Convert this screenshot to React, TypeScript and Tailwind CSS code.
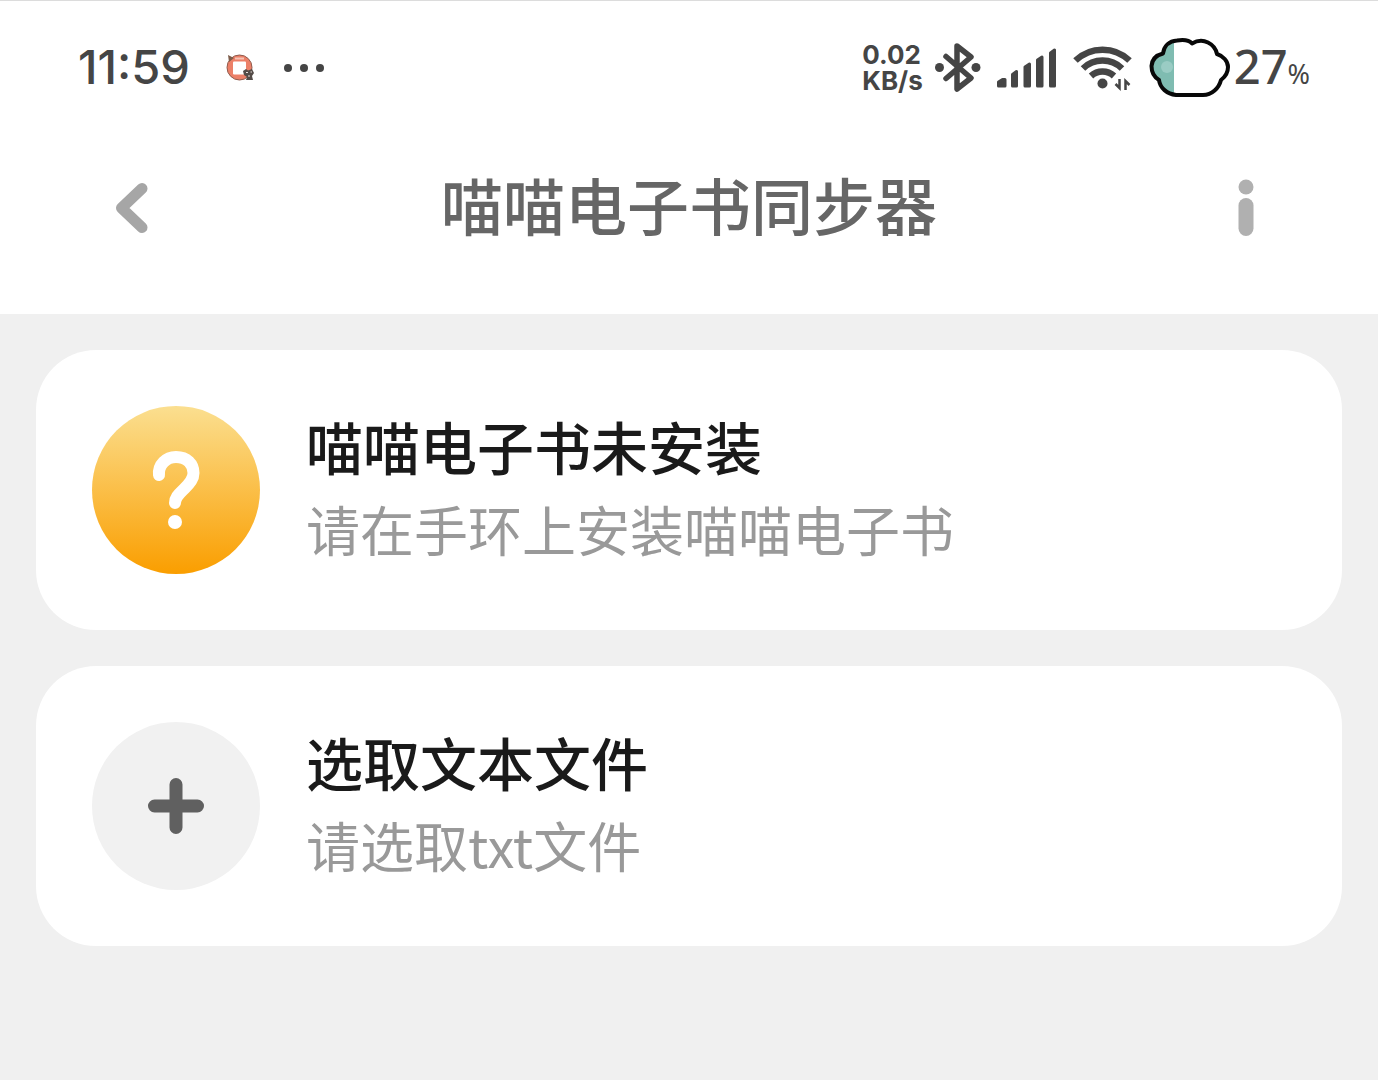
import type { ReactNode } from 'react';
import { twJoin } from 'tailwind-merge';

function AppBadgeIcon() {
  return (
    <svg viewBox="0 0 30 28" className="h-7 w-[30px]" aria-hidden="true">
      <circle cx="13.5" cy="13.5" r="12.5" fill="#ec8068" stroke="#8f5a4c" strokeWidth="1" />
      <path d="M2 1l1 7 5-4z" fill="#7d5d4a" />
      <path d="M9 4.500h9" stroke="#f6c3b4" strokeWidth="2" />
      <rect x="7" y="7.500" width="13" height="13" rx="1" fill="#fff" />
      <path d="M17 17l3-2 2 1.500 4-1.500 2 4-2 3 1 4h-7l1-3-3-2z" fill="#544c48" />
      <path d="M20 18.500h2M24.500 18h1.500M22 22h2" stroke="#e6dedb" strokeWidth="1" />
    </svg>
  );
}

function MoreDots() {
  return (
    <svg viewBox="0 0 40 8" className="h-2 w-10" fill="#454545" aria-hidden="true">
      <circle cx="4" cy="4" r="4" />
      <circle cx="20" cy="4" r="4" />
      <circle cx="36" cy="4" r="4" />
    </svg>
  );
}

function BluetoothIcon() {
  return (
    <svg viewBox="0 0 46 52" className="h-[52px] w-[46px]" aria-hidden="true">
      <path
        d="M11 14.5L36 36 22 47V4l14 11L11 36.500"
        fill="none"
        stroke="#454545"
        strokeWidth="5.500"
        strokeLinecap="round"
        strokeLinejoin="round"
      />
      <circle cx="4.500" cy="25.500" r="4.500" fill="#454545" />
      <circle cx="41" cy="25.500" r="4.500" fill="#454545" />
    </svg>
  );
}

function SignalIcon() {
  return (
    <svg
      viewBox="0 0 60 42"
      className="h-[42px] w-[60px]"
      fill="#454545"
      stroke="#454545"
      strokeWidth="3"
      strokeLinejoin="round"
      aria-hidden="true"
    >
      <path d="M1.500 39v-4l4-2.500h2.500V39z" />
      <path d="M15.500 39V27.500l4-3V39z" />
      <path d="M28 39V20l4.500-3V39z" />
      <path d="M40.500 39V13l4.500-3V39z" />
      <path d="M53.500 39V6l4-3V39z" />
    </svg>
  );
}

function WifiIcon() {
  return (
    <svg viewBox="0 0 60 46" className="h-[46px] w-[60px]" fill="none" aria-hidden="true">
      <g stroke="#454545" strokeWidth="6.500">
        <path d="M2.500 15.500A39 39 0 0 1 56.500 15.500" />
        <path d="M10 23.500A28 28 0 0 1 49 23.500" />
        <path d="M18 31A17 17 0 0 1 41 31" />
      </g>
      <circle cx="29.500" cy="38.500" r="5" fill="#454545" />
      <path d="M46.500 34v9l-4-4M52.500 45v-9l4 4" stroke="#454545" strokeWidth="2.500" />
    </svg>
  );
}

function CloudBattery() {
  const outline =
    'M2.500 28C3 21 8 17 14 15.500C15 8 20 3 28 2.500C34 1.500 40 2 43 5.500C48 2.500 54 2 59 4.500C64 7 67 11 68 16C74 18 79 23 79 29C79 35 76 39 72 42C70 50 63 57 54 57H27C18 56 11 50 10 42C5 39 2.500 34 2.500 28Z';

  return (
    <svg viewBox="0 0 81 60" className="h-[60px] w-[81px]" aria-hidden="true">
      <defs>
        <clipPath id="charge">
          <rect width="25" height="60" />
        </clipPath>
      </defs>
      <path d={outline} fill="#fff" />
      <g clipPath="url(#charge)">
        <path d={outline} fill="#7fbcb1" />
        <circle cx="18" cy="29" r="6" fill="#9accc4" />
      </g>
      <path d={outline} fill="none" stroke="#080808" strokeWidth="4" strokeLinejoin="round" />
    </svg>
  );
}

function BackIcon() {
  return (
    <svg viewBox="0 0 34 52" className="h-[52px] w-[34px]" aria-hidden="true">
      <path
        d="M27 6.500L6.500 26L27 45.500"
        fill="none"
        stroke="#a6a6a6"
        strokeWidth="11"
        strokeLinecap="round"
        strokeLinejoin="round"
      />
    </svg>
  );
}

function InfoIcon() {
  return (
    <svg viewBox="0 0 16 58" className="h-[58px] w-4" fill="#b0b0b0" aria-hidden="true">
      <circle cx="8" cy="8" r="7.500" />
      <rect x="0.500" y="19" width="15" height="38" rx="7.500" />
    </svg>
  );
}

function QuestionIcon() {
  return (
    <svg viewBox="0 0 168 168" className="size-full" aria-hidden="true">
      <path
        d="M67 69C66 59 74 51 84 51C95 51 101.500 58 101.500 67C101.500 73 98 77 93 82C87 88 83 91 83 97"
        fill="none"
        stroke="#fff"
        strokeWidth="12"
        strokeLinecap="round"
      />
      <circle cx="83" cy="116" r="7" fill="#fff" />
    </svg>
  );
}

function PlusIcon() {
  return (
    <svg viewBox="0 0 168 168" className="size-full" aria-hidden="true">
      <path d="M62.500 84H105.500M84 62.500V105.500" stroke="#606060" strokeWidth="13" strokeLinecap="round" />
    </svg>
  );
}

function StatusBar() {
  return (
    <div className="flex h-[133px] items-center justify-between pr-[68px] pl-[78px] text-[#454545]">
      <div className="flex items-center gap-9">
        <time className="pb-0.5 font-['Inter',sans-serif] text-[47px] leading-none font-medium">11:59</time>
        <div className="flex items-center gap-7">
          <AppBadgeIcon />
          <MoreDots />
        </div>
      </div>
      <div className="flex items-center gap-4">
        <div className="flex items-center gap-3">
          <div className="font-['Inter',sans-serif] text-[26px] leading-[26px] font-bold">
            <div>0.02</div>
            <div>KB/s</div>
          </div>
          <BluetoothIcon />
        </div>
        <SignalIcon />
        <WifiIcon />
        <div className="flex items-center gap-1">
          <CloudBattery />
          <div className="flex items-baseline pb-0.5 font-['Noto_Sans',sans-serif] leading-none">
            <span className="text-[47px] font-medium">27</span>
            <span className="text-[27px]">%</span>
          </div>
        </div>
      </div>
    </div>
  );
}

function CardBody({
  icon,
  iconClassName,
  title,
  hint,
}: {
  icon: ReactNode;
  iconClassName: string;
  title: string;
  hint: string;
}) {
  return (
    <>
      <span className={twJoin('size-[168px] shrink-0 rounded-full', iconClassName)}>{icon}</span>
      <span className="flex min-w-0 flex-col">
        <strong className="text-[57px] leading-[78px] font-medium text-[#1a1a1a]">{title}</strong>
        <span className="text-[54px] leading-[90px] text-[#999]">{hint}</span>
      </span>
    </>
  );
}

export default function App() {
  return (
    <div className="min-h-screen border-t border-[#dcdcdc] bg-[#f0f0f0] font-['Noto_Sans_CJK_SC',sans-serif]">
      <header className="bg-white pb-8">
        <StatusBar />
        <nav className="flex h-[148px] items-center justify-between px-[76px]">
          <button type="button" aria-label="返回" className="flex size-28 items-center justify-center">
            <BackIcon />
          </button>
          <h1 className="pb-2 text-[62px] leading-none font-medium text-[#666]">喵喵电子书同步器</h1>
          <button type="button" aria-label="关于" className="flex size-28 items-center justify-center">
            <InfoIcon />
          </button>
        </nav>
      </header>
      <main className="flex flex-col gap-9 px-9 py-9">
        <section className="flex items-center gap-[46px] rounded-[60px] bg-white p-14">
          <CardBody
            icon={<QuestionIcon />}
            iconClassName="bg-linear-to-b/srgb from-[#fbdf90] to-[#fa9e00]"
            title="喵喵电子书未安装"
            hint="请在手环上安装喵喵电子书"
          />
        </section>
        <button type="button" className="flex items-center gap-[46px] rounded-[60px] bg-white p-14 text-left">
          <CardBody
            icon={<PlusIcon />}
            iconClassName="bg-[#f1f1f1]"
            title="选取文本文件"
            hint="请选取txt文件"
          />
        </button>
      </main>
    </div>
  );
}
